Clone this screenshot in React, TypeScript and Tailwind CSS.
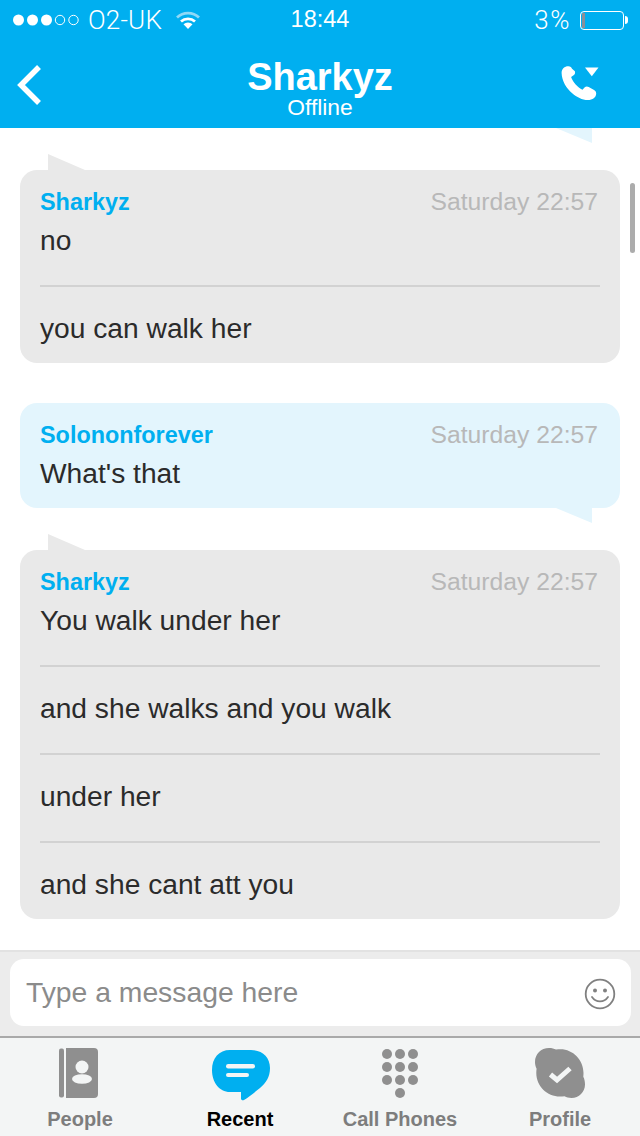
import { ReactNode } from "react";

type Message = {
  readonly name: string;
  readonly lines: readonly string[];
  readonly mine?: boolean;
};

const messages: readonly Message[] = [
  { name: "Sharkyz", lines: ["no", "you can walk her"] },
  { name: "Solononforever", lines: ["What's that"], mine: true },
  {
    name: "Sharkyz",
    lines: [
      "You walk under her",
      "and she walks and you walk",
      "under her",
      "and she cant att you",
    ],
  },
];

function StatusBar() {
  return (
    <div className="grid h-10 grid-cols-3 items-center text-white">
      <div className="flex items-center pl-[13px]">
        <svg width="68" height="14" viewBox="0 0 68 14" fill="white" className="mr-[7px]">
          <circle cx="5.5" cy="7" r="5.5" />
          <circle cx="19.5" cy="7" r="5.5" />
          <circle cx="33.5" cy="7" r="5.5" />
          <circle cx="47" cy="7" r="4.7" fill="none" stroke="white" strokeWidth="1" />
          <circle cx="60.5" cy="7" r="4.7" fill="none" stroke="white" strokeWidth="1" />
        </svg>
        <span className="font-['Roboto',sans-serif] text-[26px] font-light tracking-[0.2px]">O2-UK</span>
        <svg width="26" height="20" viewBox="0 0 26 20" className="ml-[13px]" fill="none">
          <path d="M2 7.5a16 16 0 0 1 22 0" stroke="#8fd8f6" strokeWidth="2.8" />
          <path d="M6 11.5a10.5 10.5 0 0 1 14 0" stroke="white" strokeWidth="2.8" />
          <path d="M8.500 14.300a6.500 6.500 0 0 1 9 0L13 19z" fill="white" />
        </svg>
      </div>
      <div className="text-center text-[23.5px]">18:44</div>
      <div className="flex items-center justify-end pr-[12px]">
        <span className="mr-[9px] font-['Roboto',sans-serif] text-[26px] font-light tracking-[1.5px]">3%</span>
        <div className="flex h-[19px] w-[44px] items-stretch rounded-[4px] border border-white p-[1px]">
          <div className="w-[3px] bg-[#8a8f99]" />
        </div>
        <div className="ml-px h-[8px] w-[3px] rounded-r-sm bg-white" />
      </div>
    </div>
  );
}

function Header() {
  return (
    <header className="relative z-10 h-32 shrink-0 bg-[#00aff0]">
      <StatusBar />
      <div className="grid h-[88px] grid-cols-[1fr_auto_1fr] items-center pl-4 pr-[42px]">
        <svg width="26" height="42" viewBox="0 0 26 42" fill="none" className="mt-[2px]">
          <path d="M23 3 5 21l18 18" stroke="white" strokeWidth="5.5" />
        </svg>
        <div className="relative left-[13px] flex flex-col items-center pt-2">
          <div className="text-[38px] leading-[38px] font-bold text-white">Sharkyz</div>
          <div className="text-[22.8px] leading-[22px] text-white">Offline</div>
        </div>
        <svg width="38" height="36" viewBox="0 0 38 36" className="mt-[-3px] mr-[-1px] justify-self-end" fill="white">
          <path d="M7.5 1.2C4 1 .5 3.5.6 8c.3 8 4.6 15.2 10.6 20.2 4.6 3.8 9.8 6.8 15.6 6.8 4.8 0 8.4-2.8 8.4-6.6 0-2-1.300-3-3-3.900l-4.500-2.500c-1.600-.9-3-.6-4.200.6l-2 2.100c-5-2.400-9.400-7.300-11.400-12.700l2.500-1.700c1.500-1 1.700-2.400 1.300-4L11 3.800C10.500 2.200 9.300 1.300 7.500 1.200Z" />
          <path d="M24 2.500h13.500l-6.700 8.800z" />
        </svg>
      </div>
    </header>
  );
}

function Bubble({ message }: { readonly message: Message }) {
  const { name, lines, mine } = message;
  return (
    <div className={mine ? "relative mb-[2px]" : "relative"}>
      {mine ? (
        <div className="absolute top-full right-[28px] h-[15px] w-[36px] bg-[#e3f5fd] [clip-path:polygon(0_0,100%_100%,100%_0)]" />
      ) : (
        <div className="absolute bottom-full left-[28px] h-4 w-[37px] bg-[#e9e9e9] [clip-path:polygon(0_0,100%_100%,0_100%)]" />
      )}
      <div className={`rounded-[17px] px-5 pt-[15px] ${mine ? "bg-[#e3f5fd]" : "bg-[#e9e9e9]"}`}>
        <div className="flex h-[35px] items-baseline justify-between leading-[34px]">
          <span className="text-[23.4px] font-bold text-[#00aff0]">{name}</span>
          <span className="mr-[2px] text-[24.7px] text-[#b8b8b8]">Saturday 22:57</span>
        </div>
        {lines.map((line, i) => (
          <div
            key={line}
            className={
              i === 0
                ? "pb-[25px] text-[28.2px] leading-[40px] text-[#2b2b2b] last:pb-[15px]"
                : "border-t-2 border-[#d2d2d2] pt-[21px] pb-[25px] text-[28.2px] leading-[40px] text-[#2b2b2b] last:pb-[15px]"
            }
          >
            {line}
          </div>
        ))}
      </div>
    </div>
  );
}

function Composer() {
  return (
    <div className="h-[88px] shrink-0 border-t-2 border-b-2 border-t-[#e2e2e2] border-b-[#a9a9a9] bg-[#ececec] pl-[10px] pr-[9px] pt-[7px]">
      <div className="flex h-[67px] items-center justify-between rounded-[14px] bg-white pl-[16px] pr-[15px]">
        <span className="text-[28.3px] text-[#8b8b8b]">Type a message here</span>
        <svg width="32" height="32" viewBox="0 0 32 32" fill="none" className="mt-[2px]">
          <circle cx="16" cy="16" r="14.300" stroke="#808080" strokeWidth="1.800" />
          <circle cx="11" cy="12.500" r="2" fill="#808080" />
          <circle cx="21" cy="12.500" r="2" fill="#808080" />
          <path d="M8 19c2 3 4.800 4.300 8 4.300s6-1.300 8-4.300" stroke="#808080" strokeWidth="1.800" strokeLinecap="round" />
        </svg>
      </div>
    </div>
  );
}

function Tab({ icon, label, active }: { readonly icon: ReactNode; readonly label: string; readonly active?: boolean }) {
  return (
    <div className="flex flex-col items-center">
      <div className="flex h-[56px] items-start pt-[10px]">{icon}</div>
      <div className={`mt-[11px] text-[20px] leading-[28px] font-bold ${active ? "text-black" : "text-[#7d7d7d]"}`}>
        {label}
      </div>
    </div>
  );
}

function TabBar() {
  return (
    <nav className="grid h-[98px] shrink-0 grid-cols-4 bg-[#f3f5f5]">
      <Tab
        label="People"
        icon={
          <svg width="39" height="50" viewBox="0 0 39 50" fill="#8f8f8f" className="mr-[3px]">
            <rect x="0" y="0.500" width="5" height="49" rx="2" />
            <path d="M7 0h28a4 4 0 0 1 4 4v42a4 4 0 0 1-4 4H7z" />
            <circle cx="23" cy="19" r="6.500" fill="#f3f5f5" />
            <ellipse cx="23" cy="31" rx="10" ry="4.800" fill="#f3f5f5" />
          </svg>
        }
      />
      <Tab
        active
        label="Recent"
        icon={
          <svg width="58" height="52" viewBox="0 0 58 52" fill="#00aff0" className="mt-[2px] ml-px">
            <path d="M18 0h21c11 0 19 7 19 18 0 9-4 15-10 20-5 4-11 9-16 12-1.500.8-3 0-3-1.500V42H18C7 42 0 32 0 20 0 8 7 0 18 0Z" />
            <rect x="14" y="14" width="29" height="4.500" rx="2.200" fill="#f3f5f5" />
            <rect x="14" y="23" width="23" height="4" rx="2" fill="#f3f5f5" />
          </svg>
        }
      />
      <Tab
        label="Call Phones"
        icon={
          <svg width="36" height="50" viewBox="0 0 36 50" fill="#8f8f8f">
            <circle cx="5" cy="6" r="5" />
            <circle cx="18" cy="6" r="5" />
            <circle cx="31" cy="6" r="5" />
            <circle cx="5" cy="19" r="5" />
            <circle cx="18" cy="19" r="5" />
            <circle cx="31" cy="19" r="5" />
            <circle cx="5" cy="32" r="5" />
            <circle cx="18" cy="32" r="5" />
            <circle cx="31" cy="32" r="5" />
            <circle cx="18" cy="45" r="5" />
          </svg>
        }
      />
      <Tab
        label="Profile"
        icon={
          <svg width="50" height="50" viewBox="0 0 50 50" fill="#8f8f8f">
            <path d="M14 0c3 0 5 .6 7 1.600 1.500-.2 3-.3 4.500-.3C38 1.300 48.500 12 48.500 25c0 1.300-.1 2.500-.2 3.700C49.500 31 50 33.500 50 36.500 50 44 44 50 36.500 50c-2.800 0-5-.6-7-1.700-1.500.2-3 .2-4.500.2C12 48.500 1.300 38 1.300 25c0-1.500.1-3 .3-4.300C.6 18.700 0 16.500 0 14 0 6 6 0 14 0Z" />
            <path d="m15.500 26.500 6.500 5.500 13-11.500" fill="none" stroke="#f3f5f5" strokeWidth="5" />
          </svg>
        }
      />
    </nav>
  );
}

export default function App() {
  return (
    <div className="flex h-[1136px] w-[640px] flex-col overflow-hidden bg-white font-['Liberation_Sans',Arial,sans-serif]">
      <Header />
      <main className="relative min-h-0 flex-1 overflow-hidden">
        {/* tail of the message scrolled away above */}
        <div className="absolute top-0 right-[48px] h-[15px] w-[36px] bg-[#e3f5fd] [clip-path:polygon(0_0,100%_100%,100%_0)]" />
        <div className="flex flex-col gap-10 px-5 pt-[42px]">
          {messages.map((message, i) => (
            <Bubble key={i} message={message} />
          ))}
        </div>
        <div className="absolute top-[55px] right-[5px] h-[70px] w-[5px] rounded-full bg-[#acacac]" />
      </main>
      <Composer />
      <TabBar />
    </div>
  );
}
